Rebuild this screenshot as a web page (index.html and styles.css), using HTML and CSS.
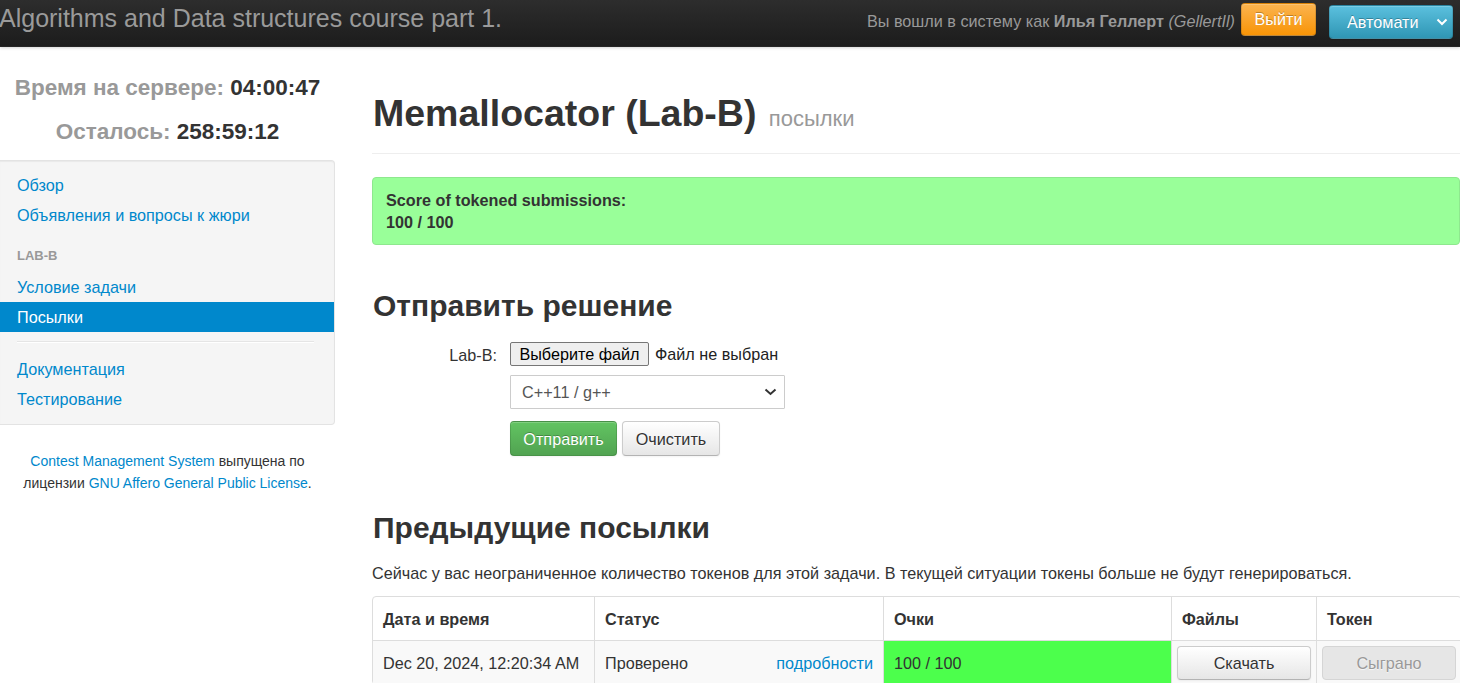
FILE: index.html
```html
<!DOCTYPE html>
<html lang="ru">
<head>
<meta charset="utf-8">
<title>Memallocator (Lab-B) посылки</title>
<link rel="stylesheet" href="styles.css">
</head>
<body>
<header class="navbar">
  <div class="brand">Algorithms and Data structures course part 1.</div>
  <div class="nav-right">
    <span class="login-text">Вы вошли в систему как <b>Илья Геллерт</b> <i>(GellertIl)</i></span>
    <button class="btn btn-warning btn-logout">Выйти</button>
    <button class="btn btn-info btn-lang">Автомати
      <svg class="caret" width="12" height="8" viewBox="0 0 12 8"><path d="M1.5 1.5 L6 6 L10.5 1.5" fill="none" stroke="#fff" stroke-width="2"/></svg>
    </button>
  </div>
</header>

<div class="page">
  <aside class="sidebar">
    <div class="clock">
      <div class="clock-line"><span class="clock-label">Время на сервере:</span> <span class="clock-value">04:00:47</span></div>
      <div class="clock-line"><span class="clock-label">Осталось:</span> <span class="clock-value">258:59:12</span></div>
    </div>
    <nav class="well">
      <a class="nav-item" href="#">Обзор</a>
      <a class="nav-item" href="#">Объявления и вопросы к жюри</a>
      <div class="nav-header">LAB-B</div>
      <a class="nav-item" href="#">Условие задачи</a>
      <a class="nav-item active" href="#">Посылки</a>
      <div class="divider"></div>
      <a class="nav-item" href="#">Документация</a>
      <a class="nav-item" href="#">Тестирование</a>
    </nav>
    <p class="footer-note"><a href="#">Contest Management System</a> выпущена по<br>лицензии <a href="#">GNU Affero General Public License</a>.</p>
  </aside>

  <main class="main">
    <div class="page-header">
      <h1 class="title">Memallocator (Lab-B) <small>посылки</small></h1>
    </div>

    <div class="alert">
      <div>Score of tokened submissions:</div>
      <div>100 / 100</div>
    </div>

    <h2 class="section-title">Отправить решение</h2>

    <form class="submit-form">
      <label class="form-label">Lab-B:</label>
      <div class="file-row">
        <span class="file-btn">Выберите файл</span>
        <span class="file-name">Файл не выбран</span>
      </div>
      <div class="spacer"></div>
      <div class="select">
        <span>C++11 / g++</span>
        <svg width="13" height="8" viewBox="0 0 13 8"><path d="M1.5 1.5 L6.5 6 L11.5 1.5" fill="none" stroke="#333" stroke-width="2"/></svg>
      </div>
      <div class="spacer"></div>
      <div class="actions">
        <button type="button" class="btn btn-success">Отправить</button>
        <button type="button" class="btn btn-default">Очистить</button>
      </div>
    </form>

    <h2 class="section-title second">Предыдущие посылки</h2>
    <p class="tokens-note">Сейчас у вас неограниченное количество токенов для этой задачи. В текущей ситуации токены больше не будут генерироваться.</p>

    <table class="subs">
      <colgroup>
        <col class="c-date"><col class="c-status"><col class="c-score"><col class="c-files"><col class="c-token">
      </colgroup>
      <thead>
        <tr><th>Дата и время</th><th>Статус</th><th>Очки</th><th>Файлы</th><th>Токен</th></tr>
      </thead>
      <tbody>
        <tr>
          <td>Dec 20, 2024, 12:20:34 AM</td>
          <td><div class="status"><span>Проверено</span><a href="#">подробности</a></div></td>
          <td class="score">100 / 100</td>
          <td class="btn-cell"><button class="btn btn-default btn-block">Скачать</button></td>
          <td class="btn-cell"><button class="btn btn-default btn-block disabled">Сыграно</button></td>
        </tr>
      </tbody>
    </table>
  </main>
</div>
</body>
</html>
```

FILE: styles.css
```css
* { box-sizing: border-box; }

html, body {
  margin: 0;
  padding: 0;
  background: #fff;
  overflow: hidden;
}

body {
  font-family: "Liberation Sans", Arial, Helvetica, sans-serif;
  font-size: 16.2px;
  line-height: 22px;
  color: #333;
  width: 1460px;
}

a { color: #0088cc; text-decoration: none; }

/* ---------- navbar ---------- */
.navbar {
  height: 47px;
  display: flex;
  align-items: flex-start;
  justify-content: space-between;
  background: linear-gradient(#2d2d2d, #1c1c1c);
  border-bottom: 1px solid #252525;
  box-shadow: 0 1px 3px rgba(0, 0, 0, 0.18);
}

.brand {
  font-size: 25px;
  line-height: 28px;
  color: #9a9a9a;
  padding-top: 4px;
  margin-left: -1px;
  white-space: nowrap;
}

.nav-right {
  display: flex;
  align-items: flex-start;
  padding-right: 7px;
}

.login-text {
  color: #999;
  font-size: 16.2px;
  line-height: 22px;
  margin-top: 10px;
  margin-right: 6px;
  white-space: nowrap;
}
.login-text b { font-weight: bold; }

.btn {
  font-family: "Liberation Sans", Arial, Helvetica, sans-serif;
  font-size: 16.2px;
  line-height: 22px;
  border-radius: 4px;
  border: 1px solid rgba(0, 0, 0, 0.12);
  border-bottom-color: rgba(0, 0, 0, 0.25);
  padding: 6px 13px;
  cursor: pointer;
  box-shadow: inset 0 1px 0 rgba(255, 255, 255, 0.2), 0 1px 2px rgba(0, 0, 0, 0.05);
}

.btn-warning {
  color: #fff;
  background: linear-gradient(#fbb450, #f89406);
  text-shadow: 0 -1px 0 rgba(0, 0, 0, 0.25);
}

.btn-info {
  color: #fff;
  background: linear-gradient(#5bc0de, #2f96b4);
  text-shadow: 0 -1px 0 rgba(0, 0, 0, 0.25);
}

.btn-success {
  color: #fff;
  background: linear-gradient(#62c462, #51a351);
  text-shadow: 0 -1px 0 rgba(0, 0, 0, 0.25);
}

.btn-default {
  color: #333;
  background: linear-gradient(#ffffff, #e6e6e6);
  border: 1px solid #cccccc;
  border-bottom-color: #b3b3b3;
  text-shadow: 0 1px 1px rgba(255, 255, 255, 0.75);
}

.btn-default.disabled {
  background: #e6e6e6;
  color: #999;
  box-shadow: none;
  border-color: #d5d5d5;
  cursor: default;
}

.btn-logout {
  margin-top: 3px;
  height: 33px;
  width: 75px;
  padding: 4px 0 5px;
}

.btn-lang {
  margin-top: 5px;
  margin-left: 13px;
  height: 34px;
  width: 124px;
  padding: 5px 0 5px 17px;
  display: flex;
  align-items: center;
  gap: 17px;
}
.btn-lang .caret { flex: none; }

/* ---------- page ---------- */
.page {
  display: flex;
  gap: 37px;
  align-items: flex-start;
}

.sidebar {
  width: 335px;
  flex: none;
}

.clock {
  padding-top: 19px;
  text-align: center;
}

.clock-line {
  font-size: 22.5px;
  line-height: 44px;
  font-weight: bold;
}
.clock-label { color: #999; }
.clock-value { color: #333; }

.well {
  margin-top: 6px;
  background: #f5f5f5;
  border: 1px solid #e3e3e3;
  border-left: none;
  border-radius: 0 4px 4px 0;
  box-shadow: inset 0 1px 1px rgba(0, 0, 0, 0.05);
  padding: 9px 0 10px;
  display: flex;
  flex-direction: column;
}

.nav-item {
  display: block;
  padding: 4px 17px;
  line-height: 22px;
  font-size: 16.2px;
  color: #0088cc;
}

.nav-item.active {
  background: #0088cc;
  color: #fff;
}

.nav-header {
  padding: 15px 17px 5px;
  font-size: 13px;
  line-height: 22px;
  font-weight: bold;
  color: #999;
  text-transform: uppercase;
}

.divider {
  height: 2px;
  margin: 9px 20px 11px 17px;
  border-top: 1px solid #e5e5e5;
  border-bottom: 1px solid #fff;
}

.footer-note {
  margin: 25px 0 0;
  text-align: center;
  font-size: 14px;
  line-height: 22px;
  color: #333;
  padding: 0 8px;
  white-space: nowrap;
}

/* ---------- main ---------- */
.main {
  width: 1088px;
  flex: none;
  padding-top: 44px;
}

.page-header {
  border-bottom: 1px solid #eee;
  padding-bottom: 18px;
}

.title {
  margin: 0;
  height: 44px;
  font-size: 37.5px;
  line-height: 44px;
  font-weight: bold;
  color: #333;
  padding-left: 1px;
}

.title small {
  font-size: 22px;
  line-height: 1;
  font-weight: normal;
  color: #999;
  margin-left: 2px;
}

.alert {
  margin-top: 23px;
  background: #99ff99;
  border: 1px solid #8ee88e;
  border-radius: 4px;
  padding: 11px 13px;
  font-weight: bold;
  line-height: 22px;
  color: #333;
}

.section-title {
  margin: 41px 0 0;
  font-size: 30px;
  line-height: 40px;
  font-weight: bold;
  color: #333;
  padding-left: 1px;
}

.section-title.second {
  margin-top: 52px;
}

.submit-form {
  margin-top: 16px;
  display: grid;
  grid-template-columns: 125px 1fr;
  column-gap: 13px;
}

.form-label {
  text-align: right;
  color: #333;
  line-height: 24px;
  padding-top: 1px;
}

.file-row {
  display: flex;
  align-items: center;
  gap: 6px;
  height: 24px;
}

.file-btn {
  display: inline-block;
  height: 24px;
  width: 139px;
  line-height: 22px;
  text-align: center;
  background: #efefef;
  border: 1px solid #767676;
  border-radius: 2px;
  color: #000;
}

.file-name { color: #222; }

.select {
  margin-top: 8px;
  width: 275px;
  height: 34px;
  border: 1px solid #ccc;
  border-radius: 1px;
  background: #fff;
  display: flex;
  align-items: center;
  justify-content: space-between;
  padding: 0 7px 0 11px;
  color: #555;
}

.actions {
  margin-top: 12px;
  display: flex;
  gap: 5px;
}

.actions .btn {
  height: 35px;
  padding: 5px 13px;
}

.actions .btn-default { width: 98px; padding: 5px 0; }
.actions .btn-success { width: 107px; padding: 5px 0; }

.tokens-note {
  margin: 14px 0 0;
  line-height: 22px;
  color: #333;
}

/* ---------- table ---------- */
.subs {
  margin-top: 12px;
  width: 1088px;
  table-layout: fixed;
  border-collapse: separate;
  border-spacing: 0;
  border: 1px solid #ddd;
  border-radius: 4px;
}

.c-date { width: 221px; }
.c-status { width: 289px; }
.c-score { width: 288px; }
.c-files { width: 145px; }
.c-token { width: 145px; }

.subs th,
.subs td {
  text-align: left;
  padding: 10px 10px;
  line-height: 22px;
  vertical-align: middle;
  border-left: 1px solid #ddd;
  color: #333;
}

.subs th:first-child,
.subs td:first-child { border-left: none; }

.subs th {
  font-weight: bold;
  height: 43px;
}

.subs td {
  border-top: 1px solid #ddd;
  background: #f9f9f9;
  height: 44px;
}

.subs td.score { background: #4cff4c; }

.status {
  display: flex;
  justify-content: space-between;
}

.subs td.btn-cell { padding: 5px 5px 0; vertical-align: top; }

.btn-block {
  width: 100%;
  height: 34px;
  padding: 5px 0;
  text-align: center;
}
```
